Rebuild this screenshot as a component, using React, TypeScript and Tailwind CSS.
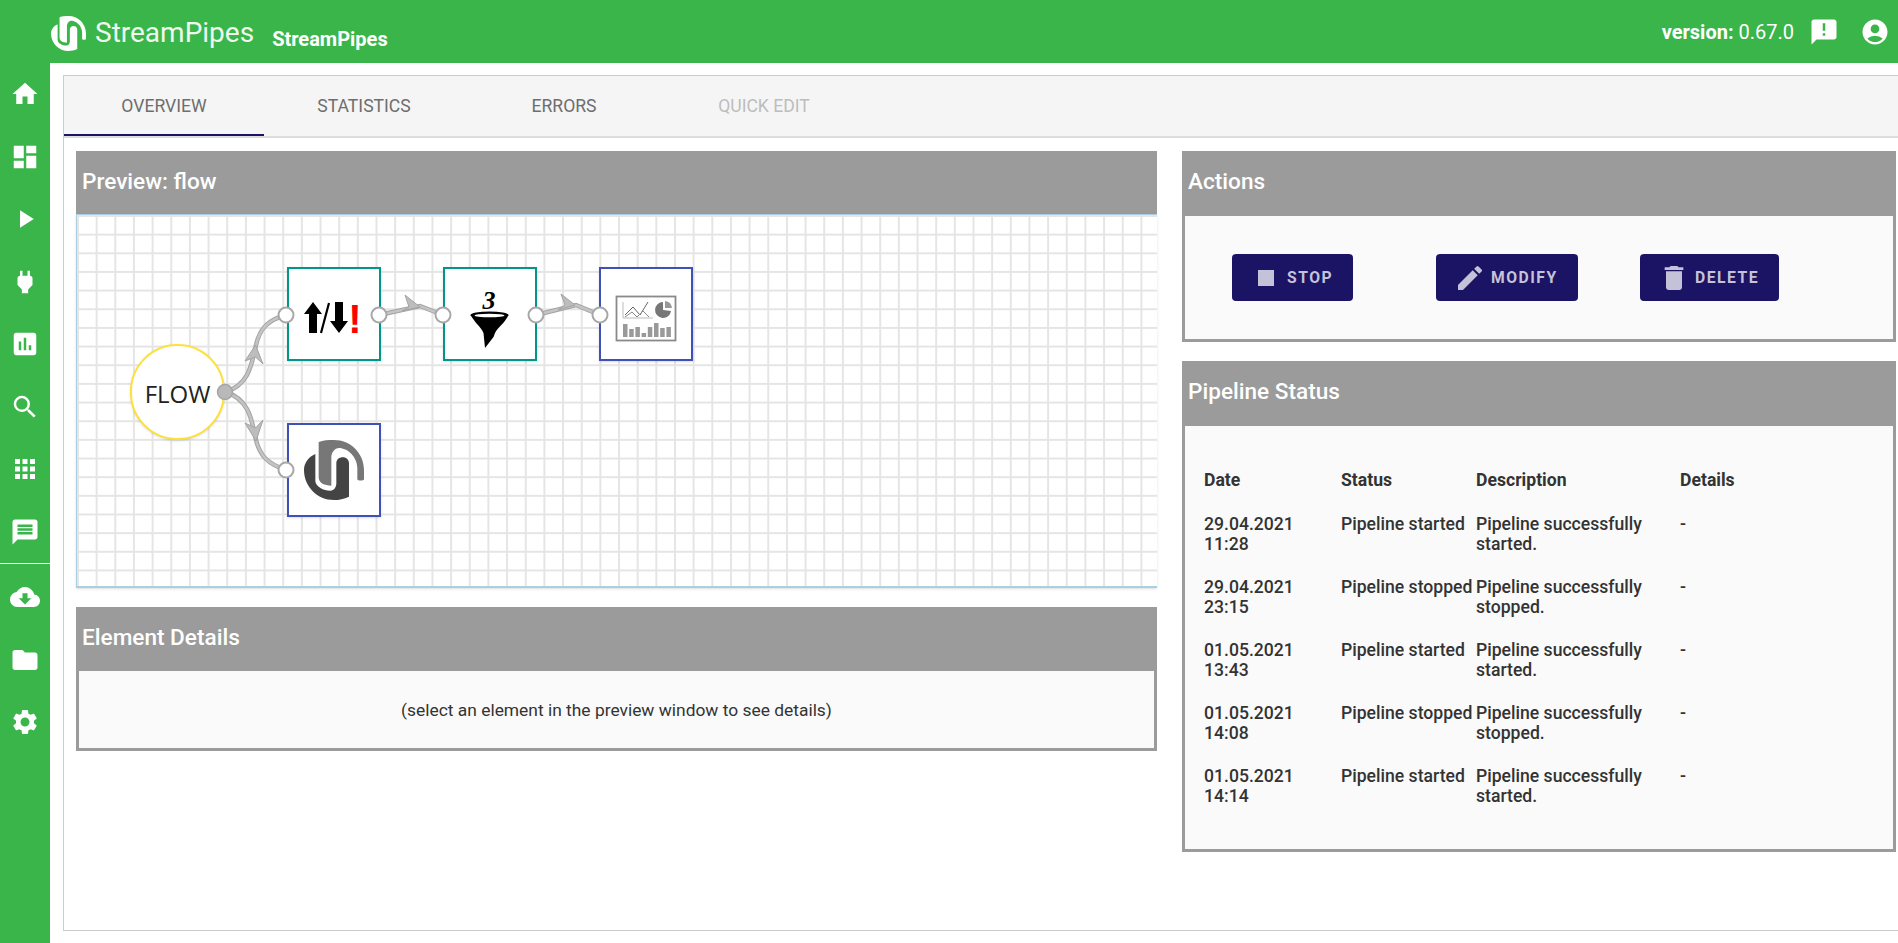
import type { ReactNode } from "react";
import {
  MdHome,
  MdDashboard,
  MdPlayArrow,
  MdPower,
  MdInsertChart,
  MdSearch,
  MdApps,
  MdMessage,
  MdCloudDownload,
  MdFolder,
  MdSettings,
  MdAnnouncement,
  MdAccountCircle,
  MdStop,
  MdEdit,
  MdDelete,
} from "react-icons/md";

const topNav = [MdHome, MdDashboard, MdPlayArrow, MdPower, MdInsertChart, MdSearch, MdApps, MdMessage];
const bottomNav = [MdCloudDownload, MdFolder, MdSettings];

const statusRows = [
  ["29.04.2021", "11:28", "Pipeline started", "Pipeline successfully started."],
  ["29.04.2021", "23:15", "Pipeline stopped", "Pipeline successfully stopped."],
  ["01.05.2021", "13:43", "Pipeline started", "Pipeline successfully started."],
  ["01.05.2021", "14:08", "Pipeline stopped", "Pipeline successfully stopped."],
  ["01.05.2021", "14:14", "Pipeline started", "Pipeline successfully started."],
];

function Logo({ size, light, dark }: { size: number; light: string; dark: string }) {
  return (
    <svg width={size} height={size} viewBox="0 0 180 180">
      <path
        d="M44 6C58 1 72 0 90 0C140 0 180 40 180 90L180 118C180 123 160 123 160 118L160 85C160 50 130 24 105 24C92 24 82 38 82 52L82 137C62 137 44 130 44 112Z"
        fill={light}
      />
      <path
        d="M34 42L34 122C34 140 60 152 78 152C92 152 97 140 97 130L97 70C97 58 106 52 116 52C128 52 135 60 135 70L135 170C120 177 105 180 90 180C40 180 0 140 0 90C0 68 15 50 34 42Z"
        fill={dark}
      />
    </svg>
  );
}

function Panel({ title, children, className, headerClass }: { title: string; children: ReactNode; className: string; headerClass: string }) {
  return (
    <div className={className}>
      <div className={headerClass + " bg-[#9b9b9b] pt-[18px] pl-[6px] text-[22.6px] leading-[26px] font-medium text-white"}>{title}</div>
      <div className="flex-1 border-x-[3px] border-b-[3px] border-[#9b9b9b] bg-[#fafafa]">{children}</div>
    </div>
  );
}

function ActionButton({ icon, label }: { icon: ReactNode; label: string }) {
  return (
    <div className="w-[204px]">
      <button className="inline-flex h-[47px] items-center gap-[5px] rounded bg-[#1b1464] pr-5 pl-[18px] text-[15.7px] font-bold tracking-[1.5px] text-[#c4c2d9]">
        {icon}
        {label}
      </button>
    </div>
  );
}

function Arrow({ points }: { points: string }) {
  return <polygon points={points} fill="#bdbdbd" stroke="#a3a3a3" strokeWidth="1" />;
}

function Connector({ d }: { d: string }) {
  return (
    <>
      <path d={d} fill="none" stroke="#a3a3a3" strokeWidth="4.5" />
      <path d={d} fill="none" stroke="#c4c4c4" strokeWidth="2.5" />
    </>
  );
}

function Endpoint({ x, y }: { x: number; y: number }) {
  return <circle cx={x} cy={y} r="7.5" fill="#ffffff" stroke="#a8a8a8" strokeWidth="2" />;
}

function ErrorIcon() {
  return (
    <svg width="89" height="89" viewBox="0 0 89 89">
      <polygon points="24,33 33,45 28,45 28,64 20,64 20,45 15,45" fill="#000" />
      <line x1="40" y1="34" x2="32" y2="64" stroke="#000" strokeWidth="2.2" />
      <polygon points="46,33 54,33 54,52 59,52 50,64 41,52 46,52" fill="#000" />
      <text x="66" y="64" textAnchor="middle" fontSize="40" fontWeight="700" fill="#ff0000" fontFamily="'Liberation Sans', sans-serif">
        !
      </text>
    </svg>
  );
}

function FunnelIcon() {
  return (
    <svg width="89" height="89" viewBox="0 0 89 89">
      <text x="44" y="40" textAnchor="middle" fontSize="26" fontWeight="700" fontStyle="italic" fill="#000" fontFamily="'Liberation Serif', serif">
        3
      </text>
      <path d="M25.5 46C30 54 36 58 38.500 64L40 79L48.500 68L50 64C53 58 60 54 63.500 46Z" fill="#000" />
      <ellipse cx="44.500" cy="46" rx="19" ry="3.500" fill="#000" />
      <ellipse cx="44.500" cy="46.500" rx="15" ry="1.800" fill="#fff" />
    </svg>
  );
}

function DashboardIcon() {
  const bars = [13, 8, 10, 4, 10, 14, 9, 10];
  return (
    <svg width="89" height="89" viewBox="0 0 89 89">
      <rect x="15.500" y="27.500" width="59" height="44" fill="#fff" stroke="#8a8a8a" strokeWidth="1.800" />
      <polyline points="22,33 22,49 52,49" fill="none" stroke="#aaa" strokeWidth="0.800" />
      <polyline points="24,46 32,38 39,46 47,33" fill="none" stroke="#666" strokeWidth="1" />
      <polyline points="24,48 31,43 36,48 42,42 48,48" fill="none" stroke="#888" strokeWidth="1" />
      <path d="M62 33A8 8 0 1 0 70 42L62 41Z" fill="#777" />
      <path d="M64 32A8 8 0 0 1 71 39L64 39Z" fill="#999" />
      {bars.map((h, i) => (
        <rect key={i} x={22 + i * 6.2} y={68 - h} width="4.500" height={h} fill="#999" />
      ))}
    </svg>
  );
}

export default function App() {
  return (
    <div className="flex h-[943px] flex-col overflow-hidden bg-white font-['Roboto',sans-serif]">
      <header className="flex h-[63px] items-center bg-[#39b54a] pr-[8px] pl-[51px] text-white">
        <div className="mt-[3px]">
          <Logo size={35} light="#ffffff" dark="#ffffff" />
        </div>
        <span className="mt-[3px] ml-[9px] text-[28px] leading-none font-normal text-[#eef8ef]">StreamPipes</span>
        <span className="mt-[14px] ml-[18px] text-[20px] leading-none font-bold">StreamPipes</span>
        <div className="ml-auto flex items-center">
          <span className="text-[20px] leading-none">
            <span className="font-bold">version:</span> 0.67.0
          </span>
          <MdAnnouncement size={30} className="ml-[15px]" />
          <MdAccountCircle size={30} className="ml-[21px]" />
        </div>
      </header>

      <div className="flex flex-1">
        <nav className="w-[50px] bg-[#39b54a] text-white">
          {topNav.map((Icon, i) => (
            <div key={i} className="flex h-[62.5px] items-center justify-center">
              <Icon size={30} />
            </div>
          ))}
          <div className="mb-[2px] h-px bg-white" />
          {bottomNav.map((Icon, i) => (
            <div key={i} className="flex h-[62.5px] items-center justify-center">
              <Icon size={30} />
            </div>
          ))}
        </nav>

        <main className="flex-1 pt-3 pb-3 pl-[13px]">
          <div className="h-full border-y border-l border-[#cccccc]">
            <div className="flex h-[62px] border-b-2 border-[#dddddd] bg-[#f5f5f5] text-[17.6px] text-[#6e6e6e]">
              <div className="flex w-[200px] items-center justify-center border-b-2 border-[#1b1464] pt-[2px]">OVERVIEW</div>
              <div className="flex w-[200px] items-center justify-center">STATISTICS</div>
              <div className="flex w-[200px] items-center justify-center">ERRORS</div>
              <div className="flex w-[200px] items-center justify-center text-[#bdbdbd]">QUICK EDIT</div>
            </div>

            <div className="flex pt-[13px] pl-3">
              <div className="w-[1081px]">
                <div className="h-[63px] bg-[#9b9b9b] pt-[18px] pl-[6px] text-[22.6px] leading-[26px] font-medium text-white">Preview: flow</div>
                <div className="relative h-[374px] border-t border-b-2 border-l border-[#a9cfe3] bg-white bg-[linear-gradient(#e5e5e5_2px,transparent_2px),linear-gradient(90deg,#e5e5e5_2px,transparent_2px)] bg-[size:18.67px_18.67px] shadow-sm">
                  <div className="absolute top-[129px] left-[53px] flex h-[96px] w-[95px] items-center justify-center rounded-full border-2 border-[#fde13a] bg-white pt-[3px] font-['Open_Sans',sans-serif] text-[24px] text-[#222] shadow-sm">
                    FLOW
                  </div>
                  <div className="absolute top-[52px] left-[210px] h-[94px] w-[94px] border-2 border-[#009688] bg-white shadow-sm">
                    <ErrorIcon />
                  </div>
                  <div className="absolute top-[52px] left-[366px] h-[94px] w-[94px] border-2 border-[#009688] bg-white shadow-sm">
                    <FunnelIcon />
                  </div>
                  <div className="absolute top-[52px] left-[522px] h-[94px] w-[94px] border-2 border-[#3f51b5] bg-white shadow-sm">
                    <DashboardIcon />
                  </div>
                  <div className="absolute top-[208px] left-[210px] flex h-[94px] w-[94px] items-center justify-center border-2 border-[#3f51b5] bg-white shadow-sm">
                    <Logo size={60} light="#777777" dark="#444444" />
                  </div>

                  <svg className="pointer-events-none absolute top-0 left-0" width="1080" height="372">
                    <g transform="translate(-77 -215)">
                      <Connector d="M225 392C250 385 252 362 256 345C260 328 268 320 286 315" />
                      <Connector d="M225 392C250 399 252 422 256 440C260 456 268 464 286 470" />
                      <Connector d="M379 315L420 306L443 315" />
                      <Connector d="M536 315L576 305L600 315" />
                      <Arrow points="255.500,345 263,364 255.500,357 245,361" />
                      <Arrow points="256,441 245,423 255.500,428 263,420" />
                      <Arrow points="420,307 405,295 409,307 402,311" />
                      <Arrow points="575,305 561,294 565,305 558,310" />
                      <circle cx="225" cy="392" r="7.500" fill="#b9b9b9" stroke="#a5a5a5" strokeWidth="1.500" />
                      <Endpoint x={286} y={315} />
                      <Endpoint x={379} y={315} />
                      <Endpoint x={443} y={315} />
                      <Endpoint x={536} y={315} />
                      <Endpoint x={600} y={315} />
                      <Endpoint x={286} y={470} />
                    </g>
                  </svg>
                </div>

                <Panel title="Element Details" headerClass="h-[64px]" className="mt-[19px] flex h-[144px] flex-col">
                  <div className="pt-[30px] text-center text-[17.4px] leading-[19px] text-[#333]">
                    (select an element in the preview window to see details)
                  </div>
                </Panel>
              </div>

              <div className="ml-[25px] w-[714px]">
                <Panel title="Actions" headerClass="h-[65px]" className="flex h-[191px] flex-col">
                  <div className="flex pt-[38px] pl-[47px]">
                    <ActionButton icon={<MdStop size={32} />} label="STOP" />
                    <ActionButton icon={<MdEdit size={32} />} label="MODIFY" />
                    <ActionButton icon={<MdDelete size={32} />} label="DELETE" />
                  </div>
                </Panel>

                <Panel title="Pipeline Status" headerClass="h-[65px]" className="mt-[19px] flex h-[491px] flex-col">
                  <div className="pt-[45px] pl-[19px] text-[17.6px] leading-[19.5px] text-[#333]">
                    <div className="grid h-[44px] grid-cols-[137px_135px_204px_1fr] font-bold">
                      <div>Date</div>
                      <div>Status</div>
                      <div>Description</div>
                      <div>Details</div>
                    </div>
                    {statusRows.map((row, i) => (
                      <div key={i} className="grid h-[63px] grid-cols-[137px_135px_204px_1fr] font-medium">
                        <div>
                          {row[0]}
                          <br />
                          {row[1]}
                        </div>
                        <div className="whitespace-nowrap">{row[2]}</div>
                        <div className="w-[190px]">{row[3]}</div>
                        <div>-</div>
                      </div>
                    ))}
                  </div>
                </Panel>
              </div>
            </div>
          </div>
        </main>
      </div>
    </div>
  );
}
